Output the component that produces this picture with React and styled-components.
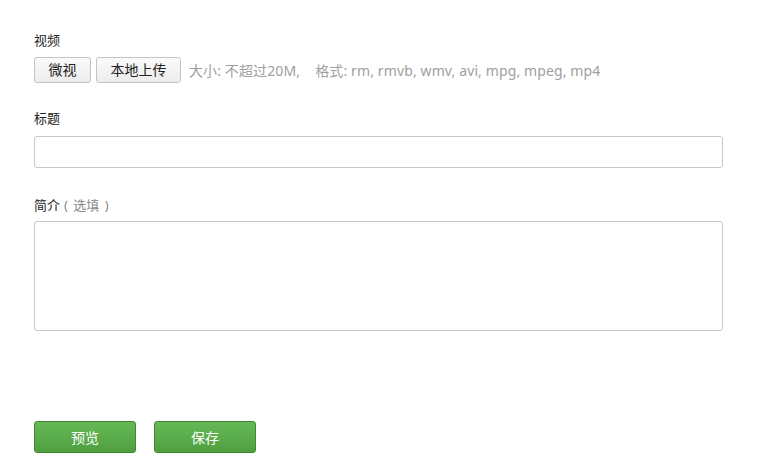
import styled, { createGlobalStyle } from "styled-components";

const GlobalStyle = createGlobalStyle`
  body {
    margin: 0;
    background: #fff;
    font-family: "Noto Sans", "Noto Sans CJK SC", sans-serif;
    color: #222;
  }
`;

const Page = styled.div`
  padding: 30px 34px 20px;
  width: 689px;
`;

const Field = styled.div`
  display: flex;
  flex-direction: column;
  margin-bottom: ${(p) => p.$after || 0}px;
`;

const Label = styled.div`
  font-size: 13px;
  line-height: 20px;
  height: 20px;
  margin-bottom: ${(p) => p.$gap || 8}px;
  color: #222;
  white-space: pre;
`;

const Optional = styled.span`
  margin-left: 4px;
  word-spacing: 2px;
  color: #888;
`;

const UploadRow = styled.div`
  display: flex;
  align-items: center;
  gap: 5px;
`;

const GrayButton = styled.button`
  box-sizing: border-box;
  width: ${(p) => p.$w}px;
  height: 26px;
  padding: 0;
  border: 1px solid #c4c4c4;
  border-radius: 3px;
  background: linear-gradient(#fbfbfb, #ececec);
  font-family: inherit;
  font-size: 14px;
  line-height: 24px;
  color: #222;
  cursor: pointer;
`;

const Hint = styled.span`
  margin-left: 3px;
  font-size: 14px;
  letter-spacing: 0.12px;
  color: #a0a0a0;
  white-space: pre;
`;

const TextInput = styled.input`
  box-sizing: border-box;
  width: 100%;
  height: 32px;
  border: 1px solid #c8c8c8;
  border-radius: 3px;
  padding: 0 8px;
  font-family: inherit;
  font-size: 14px;
  outline: none;
`;

const TextArea = styled.textarea`
  box-sizing: border-box;
  width: 100%;
  height: 110px;
  border: 1px solid #c8c8c8;
  border-radius: 3px;
  padding: 6px 8px;
  font-family: inherit;
  font-size: 14px;
  resize: none;
  outline: none;
  display: block;
`;

const Actions = styled.div`
  display: flex;
  gap: 18px;
`;

const GreenButton = styled.button`
  width: 102px;
  height: 32px;
  border: 1px solid #3f8a31;
  border-radius: 3px;
  background: linear-gradient(#66b956, #4f9f40);
  color: #fff;
  font-family: inherit;
  font-size: 14px;
  cursor: pointer;
`;

export default function App() {
  return (
    <Page>
      <GlobalStyle />
      <Field $after={25}>
        <Label $gap={7}>视频</Label>
        <UploadRow>
          <GrayButton $w={57}>微视</GrayButton>
          <GrayButton $w={85}>本地上传</GrayButton>
          <Hint>{"大小: 不超过20M,    格式: rm, rmvb, wmv, avi, mpg, mpeg, mp4"}</Hint>
        </UploadRow>
      </Field>
      <Field $after={27}>
        <Label $gap={8}>标题</Label>
        <TextInput type="text" />
      </Field>
      <Field $after={90}>
        <Label $gap={6}>
          简介<Optional>{"( 选填 )"}</Optional>
        </Label>
        <TextArea />
      </Field>
      <Actions>
        <GreenButton>预览</GreenButton>
        <GreenButton>保存</GreenButton>
      </Actions>
    </Page>
  );
}
